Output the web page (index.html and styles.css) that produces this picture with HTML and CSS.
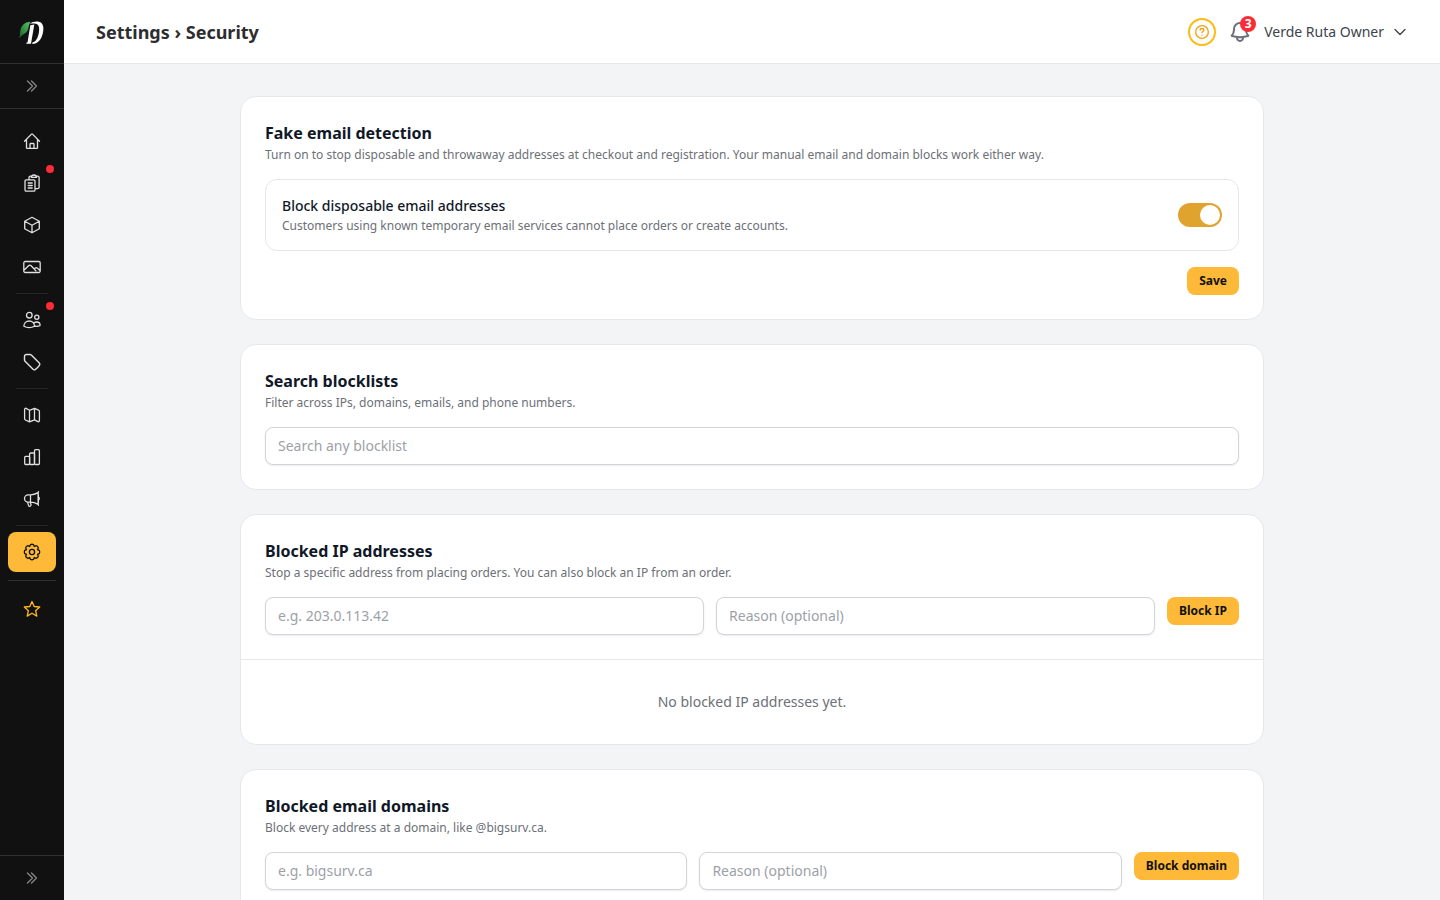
FILE: index.html
```html
<!DOCTYPE html>
<html lang="en">
<head>
    <meta charset="UTF-8">
    <meta name="viewport" content="width=device-width, initial-scale=1.0">
    <title>Settings › Security</title>
    <link rel="stylesheet" href="styles.css">
</head>
<body>
    <div class="app">
        <aside class="sidebar">
            <a class="logo" href="#" aria-label="Dashboard">
                <svg width="28" height="28" viewBox="0 0 28 28">
                    <defs>
                        <linearGradient id="leaf" x1="0" y1="1" x2="1" y2="0">
                            <stop offset="0" stop-color="#145c28"/>
                            <stop offset="1" stop-color="#58c766"/>
                        </linearGradient>
                    </defs>
                    <path d="M1 20.500C2.500 17 1.500 14 3 10 4.500 6 8 4 12.500 3.700 10.500 6.500 11 9.500 9.500 12.500 8 15.500 4.500 16 1 20.500Z" fill="url(#leaf)"/>
                    <path d="M12.300 7.200 16.300 6.600 13 25.800H8.200L8.500 24.700 9.600 24.200Z" fill="#fff"/>
                    <path d="M11.800 5.800C14 3.800 17.200 3.100 20 3.500 24.500 4.300 26 8 25.200 13 24.200 20.500 20.500 26 14.300 26L14.600 24.300C17.800 24 19.900 20 20.900 14.500 21.700 9.500 21 6.400 17.700 5.700 15.500 5.300 13.500 5.500 11.800 5.800Z" fill="#fff"/>
                </svg>
            </a>
            <button class="expand" type="button" aria-label="Expand menu">
                <svg class="icon-small" viewBox="0 0 24 24"><path d="m5.250 4.500 7.500 7.500-7.500 7.500m6-15 7.500 7.500-7.500 7.500"/></svg>
            </button>
            <nav class="menu" aria-label="Main">
                <a href="#" aria-label="Home">
                    <svg class="icon" viewBox="0 0 20 20"><path d="M2.500 10.200 9.500 3.100a.7.7 0 0 1 1 0l7 7.100M4.500 8.500v8.200c0 .4.300.7.700.7h9.600c.4 0 .7-.3.700-.7V8.500M8 17.300v-4c0-.4.300-.8.800-.8h2.400c.5 0 .8.400.8.800v4"/></svg>
                </a>
                <a href="#" aria-label="Orders">
                    <svg class="icon" viewBox="0 0 20 20"><path d="M4.200 6.800h7.600A1.200 1.200 0 0 1 13 8v9a1.200 1.200 0 0 1-1.200 1.200H4.200A1.200 1.200 0 0 1 3 17V8a1.200 1.200 0 0 1 1.200-1.200ZM6.200 10h4M6.200 12.500h4M6.200 15h4M7 6.500V4.600c0-.8.600-1.400 1.400-1.400h.9M14.500 3.200h1.200c.8 0 1.400.6 1.400 1.400v9.600c0 .8-.6 1.400-1.400 1.400h-2.500M9.300 4.400c0-1.400.9-2.400 2.600-2.400s2.600 1 2.600 2.400Z"/></svg>
                    <span class="dot"></span>
                </a>
                <a href="#" aria-label="Products">
                    <svg class="icon" viewBox="0 0 20 20"><path d="M17.300 6.300 10 2.300 2.700 6.300v7.500l7.300 4 7.300-4ZM2.700 6.300l7.300 4 7.300-4M10 10.300v7.500"/></svg>
                </a>
                <a href="#" aria-label="Media">
                    <svg class="icon" viewBox="0 0 20 20"><path d="M3.200 4.500h13.600A1.400 1.400 0 0 1 18.200 5.900v8.200a1.400 1.400 0 0 1-1.400 1.400H3.200A1.400 1.400 0 0 1 1.800 14.100V5.900a1.400 1.400 0 0 1 1.400-1.400ZM2 13.200l4.500-4.400a1.900 1.900 0 0 1 2.600 0l4.800 4.900M12.200 12l.8-.8a1.900 1.900 0 0 1 2.500 0l2.500 2.300"/></svg>
                </a>
                <hr>
                <a href="#" aria-label="Customers">
                    <svg class="icon" viewBox="0 0 20 20"><circle cx="7.300" cy="5.200" r="2.800"/><circle cx="14.800" cy="7.300" r="2.100"/><path d="M7.200 11c3 0 5.300 2.200 5.300 5.200-1.500.9-3.400 1.400-5.300 1.400s-3.800-.5-5.300-1.400C1.900 13.200 4.200 11 7.200 11ZM11.800 13.200c.8-.8 1.800-1.200 2.900-1.200 1.900 0 3.400 1.500 3.400 3.500-1.700.8-3.600 1-5.500.5"/></svg>
                    <span class="dot"></span>
                </a>
                <a href="#" aria-label="Discounts">
                    <svg class="icon" viewBox="0 0 24 24"><path d="M9.568 3H5.250A2.250 2.250 0 0 0 3 5.250v4.318c0 .597.237 1.170.659 1.591l9.581 9.581c.699.699 1.780.872 2.607.330a18.095 18.095 0 0 0 5.223-5.223c.542-.827.369-1.908-.330-2.607L11.160 3.660A2.250 2.250 0 0 0 9.568 3Z" stroke-width="1.700"/></svg>
                </a>
                <hr>
                <a href="#" aria-label="Zones">
                    <svg class="icon" viewBox="0 0 20 20"><path d="M2.600 4.400c0-.9.700-1.400 1.500-1l3.400 1.900 5-2 4.100 1.900c.5.200.8.700.8 1.200v9.200c0 .9-.7 1.400-1.500 1l-3.400-1.700-5 2-4.100-1.900c-.5-.2-.8-.7-.8-1.200ZM7.500 5.300v11.600M12.500 3.300v11.600"/></svg>
                </a>
                <a href="#" aria-label="Reports">
                    <svg class="icon" viewBox="0 0 20 20"><rect x="2.700" y="9.300" width="4.900" height="8.200" rx="1"/><rect x="7.600" y="6" width="4.900" height="11.500" rx="1"/><rect x="12.500" y="2.700" width="4.900" height="14.800" rx="1"/></svg>
                </a>
                <a href="#" aria-label="Marketing">
                    <svg class="icon" viewBox="0 0 20 20"><path d="M8.500 5.800H6.200a3.700 3.700 0 0 0 0 7.400h2.300c2.700 0 5.200.8 7.600 2.200V3.600c-2.400 1.400-4.900 2.200-7.600 2.200ZM8.500 5.800v7.400M16.100 3.600l.4-.9M16.100 15.400l.4.900M16.100 3.600c.7 3.900.7 7.900 0 11.800M16.700 8.200c.8.700.8 1.900 0 2.600M5.700 13.200c.1 1.300.5 2.500 1 3.600.3.500.8.700 1.300.4l.7-.4c.4-.3.500-.7.300-1.200-.4-.8-.6-1.600-.7-2.400"/></svg>
                </a>
                <hr>
                <a class="active" href="#" aria-label="Settings" aria-current="page">
                    <svg class="icon" viewBox="0 0 20 20"><circle cx="10" cy="10" r="2.600"/><path d="M8.400 2.700Q10 1.800 11.600 2.700L12.300 4.500 14.100 3.700Q15.900 4.100 16.300 5.900L15.500 7.700 17.300 8.400Q18.200 10 17.300 11.600L15.500 12.300 16.300 14.100Q15.900 15.900 14.100 16.300L12.300 15.500 11.600 17.300Q10 18.200 8.400 17.300L7.700 15.500 5.900 16.300Q4.100 15.900 3.700 14.100L4.500 12.300 2.700 11.600Q1.800 10 2.700 8.400L4.500 7.700 3.700 5.900Q4.100 4.100 5.900 3.700L7.700 4.500Z"/></svg>
                </a>
            </nav>
            <div class="favorites">
                <a href="#" aria-label="Favorites">
                    <svg class="icon" viewBox="0 0 20 20"><path d="m10 2.500 2.200 5 5.500.500-4.100 3.700 1.200 5.400L10 14.300l-4.800 2.800 1.200-5.400-4.100-3.700 5.500-.500Z"/></svg>
                </a>
            </div>
            <button class="expand expand-bottom" type="button" aria-label="Expand sidebar">
                <svg class="icon-small" viewBox="0 0 24 24"><path d="m5.250 4.500 7.500 7.500-7.500 7.500m6-15 7.500 7.500-7.500 7.500"/></svg>
            </button>
        </aside>

        <div class="page">
            <header class="topbar">
                <h1>Settings › Security</h1>
                <div class="topbar-right">
                    <button class="help" type="button" aria-label="Help">
                        <svg class="icon-small" viewBox="0 0 24 24"><path d="M9.200 9.200c0-1.500 1.200-2.400 2.800-2.400s2.800.9 2.800 2.300c0 1.800-2.800 2-2.800 4.100M12 16.800v.1M21.500 12a9.500 9.500 0 1 1-19 0 9.500 9.500 0 0 1 19 0Z"/></svg>
                    </button>
                    <button class="bell" type="button" aria-label="Notifications, 3 new">
                        <svg class="icon-bell" viewBox="0 0 24 24"><path d="M14.857 17.082a23.848 23.848 0 0 0 5.454-1.310A8.967 8.967 0 0 1 18 9.750V9A6 6 0 0 0 6 9v.750a8.967 8.967 0 0 1-2.312 6.022c1.733.640 3.560 1.085 5.455 1.310m5.714 0a24.255 24.255 0 0 1-5.714 0m5.714 0a3 3 0 1 1-5.714 0"/></svg>
                        <span class="count">3</span>
                    </button>
                    <button class="user" type="button">
                        Verde Ruta Owner
                        <svg class="icon-small" viewBox="0 0 24 24"><path d="m19.500 8.250-7.500 7.500-7.500-7.500"/></svg>
                    </button>
                </div>
            </header>

            <main class="content">
                <div class="cards">
                    <section class="card">
                        <h2>Fake email detection</h2>
                        <p class="hint">Turn on to stop disposable and throwaway addresses at checkout and registration. Your manual email and domain blocks work either way.</p>
                        <form>
                            <div class="option">
                                <div>
                                    <label for="disposable">Block disposable email addresses</label>
                                    <p class="hint">Customers using known temporary email services cannot place orders or create accounts.</p>
                                </div>
                                <input class="switch" type="checkbox" role="switch" id="disposable" checked>
                            </div>
                            <div class="actions">
                                <button class="btn" type="button">Save</button>
                            </div>
                        </form>
                    </section>

                    <section class="card">
                        <h2>Search blocklists</h2>
                        <p class="hint">Filter across IPs, domains, emails, and phone numbers.</p>
                        <input class="field" type="text" placeholder="Search any blocklist" aria-label="Search any blocklist">
                    </section>

                    <section class="card">
                        <h2>Blocked IP addresses</h2>
                        <p class="hint">Stop a specific address from placing orders. You can also block an IP from an order.</p>
                        <form class="block-form">
                            <input class="field" type="text" placeholder="e.g. 203.0.113.42" aria-label="IP address">
                            <input class="field" type="text" placeholder="Reason (optional)" aria-label="Reason">
                            <button class="btn" type="button">Block IP</button>
                        </form>
                        <p class="empty">No blocked IP addresses yet.</p>
                    </section>

                    <section class="card">
                        <h2>Blocked email domains</h2>
                        <p class="hint">Block every address at a domain, like @bigsurv.ca.</p>
                        <form class="block-form">
                            <input class="field" type="text" placeholder="e.g. bigsurv.ca" aria-label="Email domain">
                            <input class="field" type="text" placeholder="Reason (optional)" aria-label="Reason">
                            <button class="btn" type="button">Block domain</button>
                        </form>
                    </section>
                </div>
            </main>
        </div>
    </div>
</body>
</html>
```
FILE: styles.css
```css
*{
    margin: 0;
    padding: 0;
    box-sizing: border-box;
}
body{
    font-family: "Noto Sans", sans-serif;
    font-size: 14px;
    line-height: 20px;
    color: #101828;
    background: #f3f4f6;
}
button, input{
    font: inherit;
    color: inherit;
}
button{
    border: 0;
    background: none;
    cursor: pointer;
}
svg{
    display: block;
    flex-shrink: 0;
}
.icon, .icon-small, .icon-bell{
    width: 20px;
    height: 20px;
    fill: none;
    stroke: currentColor;
    stroke-width: 1.3;
    stroke-linecap: round;
    stroke-linejoin: round;
}
.icon-small{
    width: 16px;
    height: 16px;
    stroke-width: 2;
}
.icon-bell{
    width: 24px;
    height: 24px;
    stroke-width: 2;
}
.app{
    display: flex;
    height: 100vh;
}

/* sidebar */
.sidebar{
    width: 64px;
    flex-shrink: 0;
    display: flex;
    flex-direction: column;
    background: #111;
    color: #e0e0e0;
}
.logo{
    height: 64px;
    display: flex;
    align-items: center;
    justify-content: center;
    border-bottom: 1px solid #2e3033;
}
.expand{
    height: 45px;
    display: flex;
    align-items: center;
    justify-content: center;
    color: #858585;
    border-bottom: 1px solid #2e3033;
}
.expand-bottom{
    margin-top: auto;
    border-bottom: 0;
    border-top: 1px solid #2e3033;
}
.menu{
    display: flex;
    flex-direction: column;
    gap: 2px;
    padding: 12px 8px 8px;
}
.menu a, .favorites a{
    position: relative;
    height: 40px;
    display: flex;
    align-items: center;
    justify-content: center;
    color: inherit;
    border-radius: 8px;
}
.menu a.active{
    background: #ffb938;
    color: #111;
}
.menu hr{
    border: 0;
    height: 1px;
    margin: 4px 8px;
    background: #262626;
}
.dot{
    position: absolute;
    top: 2px;
    right: 2px;
    width: 8px;
    height: 8px;
    border-radius: 50%;
    background: #fb2c36;
}
.favorites{
    margin: 0 8px;
    padding-top: 8px;
    border-top: 1px solid #2e3033;
}
.favorites a{
    color: #fcbb15;
}

/* top bar */
.page{
    flex: 1;
    min-width: 0;
    display: flex;
    flex-direction: column;
}
.topbar{
    height: 64px;
    flex-shrink: 0;
    display: flex;
    align-items: center;
    justify-content: space-between;
    padding: 0 32px;
    background: #fff;
    border-bottom: 1px solid #e5e7eb;
}
.topbar h1{
    font-size: 18px;
    line-height: 28px;
    font-weight: 700;
    color: #2d2d2f;
}
.topbar-right{
    display: flex;
    align-items: center;
    gap: 12px;
}
.help{
    width: 28px;
    height: 28px;
    display: flex;
    align-items: center;
    justify-content: center;
    border: 2px solid #fcbb15;
    border-radius: 50%;
    color: #f0a010;
}
.bell{
    position: relative;
    color: #6b6f7a;
}
.count{
    position: absolute;
    top: -4px;
    right: -4px;
    width: 16px;
    height: 16px;
    border-radius: 50%;
    background: #fb2c36;
    color: #fff;
    font-size: 12px;
    line-height: 16px;
    font-weight: 700;
}
.user{
    display: flex;
    align-items: center;
    gap: 8px;
    color: #40444b;
}

/* content */
.content{
    flex: 1;
    min-height: 0;
    padding: 32px;
    overflow-y: auto;
    scrollbar-width: none;
}
.cards{
    max-width: 1024px;
    margin: 0 auto;
    display: flex;
    flex-direction: column;
    gap: 24px;
}
.card{
    padding: 24px;
    background: #fff;
    border: 1px solid #e5e7eb;
    border-radius: 16px;
}
.card h2{
    font-size: 16px;
    line-height: 24px;
    font-weight: 700;
}
.hint{
    margin-top: 2px;
    font-size: 12px;
    line-height: 16px;
    color: #6c7077;
}
.option{
    margin-top: 16px;
    padding: 16px;
    display: flex;
    align-items: center;
    justify-content: space-between;
    gap: 16px;
    border: 1px solid #e5e7eb;
    border-radius: 12px;
}
.option label{
    display: block;
    font-weight: 500;
}
.switch{
    appearance: none;
    width: 44px;
    height: 24px;
    flex-shrink: 0;
    display: flex;
    align-items: center;
    padding: 2px;
    border-radius: 12px;
    background: #d1d5dc;
    cursor: pointer;
}
.switch::before{
    content: "";
    width: 20px;
    height: 20px;
    border-radius: 50%;
    background: #fff;
}
.switch:checked{
    justify-content: flex-end;
    background: #e0a32e;
}
.actions{
    margin-top: 16px;
    display: flex;
    justify-content: flex-end;
}
.btn{
    padding: 6px 12px;
    border-radius: 8px;
    background: #ffb938;
    color: #111;
    font-size: 12px;
    line-height: 16px;
    font-weight: 700;
    white-space: nowrap;
}
.field{
    width: 100%;
    min-width: 0;
    height: 38px;
    padding: 0 12px 2px;
    border: 1px solid #d1d5d9;
    border-radius: 8px;
    background: #fff;
    box-shadow: 0 1px 2px rgba(0,0,0,0.08);
}
.field::placeholder{
    color: #9da1a7;
    opacity: 1;
}
.card > .field{
    display: block;
    margin-top: 16px;
}
.block-form{
    margin-top: 16px;
    display: grid;
    grid-template-columns: 1fr 1fr auto;
    align-items: start;
    gap: 12px;
}
.empty{
    margin: 24px -24px -24px;
    padding: 32px;
    text-align: center;
    color: #6c7077;
    border-top: 1px solid #e5e7eb;
}
```
